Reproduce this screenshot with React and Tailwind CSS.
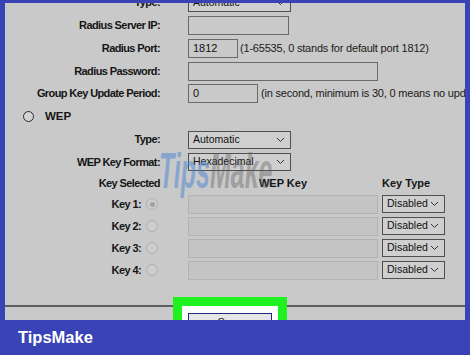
import React from "react";

const font = "font-['Liberation_Sans',Arial,sans-serif]";

function Chevron() {
  return (
    <svg width="9" height="6" viewBox="0 0 9 6" className="shrink-0">
      <polyline points="1,1 4.5,4.5 8,1" fill="none" stroke="#333" strokeWidth="1" />
    </svg>
  );
}

function Select({ value, w }) {
  return (
    <div
      className={`${w} h-[18px] border border-[#4f4f4f] bg-[#cfcfcf] flex items-center justify-between pl-[4px] pr-[5px] text-[10.5px] text-[#111]`}
    >
      <span>{value}</span>
      <Chevron />
    </div>
  );
}

function Label({ children, w = "w-[155px]" }) {
  return (
    <div className={`${w} shrink-0 text-right font-bold text-[11px] tracking-[-0.6px] text-[#151515]`}>
      {children}
    </div>
  );
}

function Field({ w, value }) {
  return (
    <div
      className={`${w} h-[19px] border border-[#6a6a6a] bg-[#c9c9c9] flex items-center pl-[4px] text-[11px] text-[#111]`}
    >
      {value}
    </div>
  );
}

function KeyRow({ n, checked }) {
  return (
    <div className="flex items-center h-[22px]">
      <Label w="w-[136px]">Key {n}:</Label>
      <div className="ml-[5px] w-[12px] h-[12px] rounded-full border border-[#b0b0b0] bg-[#cdcdcd] flex items-center justify-center">
        {checked && <div className="w-[5px] h-[5px] rounded-full bg-[#a0a0a0]" />}
      </div>
      <div className="ml-[30px] w-[190px] h-[19px] border border-[#b3b3b3] bg-[#c4c4c4]" />
      <div className="ml-[4px]">
        <Select value="Disabled" w="w-[63px]" />
      </div>
    </div>
  );
}

export default function App() {
  return (
    <div className={`w-[470px] h-[355px] bg-[#3a43b6] flex flex-col ${font}`}>
      <div className="px-[5px] pt-[3px]">
        <div className="relative h-[317px] bg-[#c9c9c9] overflow-hidden">
          <div className="-mt-[12px]">
            <div className="flex items-center h-[23px]">
              <Label>Type:</Label>
              <div className="ml-[28px]">
                <Select value="Automatic" w="w-[103px]" />
              </div>
            </div>
            <div className="flex items-center h-[23px]">
              <Label>Radius Server IP:</Label>
              <div className="ml-[28px]">
                <Field w="w-[101px]" />
              </div>
            </div>
            <div className="flex items-center h-[23px] whitespace-nowrap">
              <Label>Radius Port:</Label>
              <div className="ml-[28px]">
                <Field w="w-[50px]" value="1812" />
              </div>
              <span className="ml-[2px] text-[11px] tracking-[-0.2px] text-[#1a1a1a]">
                (1-65535, 0 stands for default port 1812)
              </span>
            </div>
            <div className="flex items-center h-[22px]">
              <Label>Radius Password:</Label>
              <div className="ml-[28px]">
                <Field w="w-[190px]" />
              </div>
            </div>
            <div className="flex items-center h-[23px] whitespace-nowrap">
              <Label>Group Key Update Period:</Label>
              <div className="ml-[28px]">
                <Field w="w-[70px]" value="0" />
              </div>
              <span className="ml-[3px] text-[11px] tracking-[-0.2px] text-[#1a1a1a]">
                (in second, minimum is 30, 0 means no update)
              </span>
            </div>

            <div className="flex items-center h-[23px] pl-[18px]">
              <div className="w-[11px] h-[11px] rounded-full border border-[#2a2a2a] bg-[#d2d2d2]" />
              <span className="ml-[11px] font-bold text-[11.5px] text-[#151515]">WEP</span>
            </div>

            <div className="flex items-center h-[23px]">
              <Label>Type:</Label>
              <div className="ml-[28px]">
                <Select value="Automatic" w="w-[103px]" />
              </div>
            </div>
            <div className="flex items-center h-[22px]">
              <Label>WEP Key Format:</Label>
              <div className="ml-[28px]">
                <Select value="Hexadecimal" w="w-[103px]" />
              </div>
            </div>

            <div className="flex items-center h-[20px]">
              <Label>Key Selected</Label>
              <div className="ml-[28px] w-[190px] text-center font-bold text-[11px] text-[#151515]">
                WEP Key
              </div>
              <div className="ml-[4px] font-bold text-[11px] text-[#151515]">Key Type</div>
            </div>

            <KeyRow n={1} checked />
            <KeyRow n={2} />
            <KeyRow n={3} />
            <KeyRow n={4} />

            <div className="relative mt-[24px]">
              <div className="h-[2px] bg-[#5e5e5e]" />
              <div className="absolute left-[168px] -top-[8px] w-[114px] h-[40px] border-[9px] border-[#1ff01f] bg-white">
                <div className="mt-[7px] ml-[6px] w-[84px] h-[18px] border border-[#1f2a7a] bg-[#e6e6e6] flex justify-center text-[11px] text-[#111]">
                  Save
                </div>
              </div>
            </div>
          </div>

          <div className="absolute left-[154px] top-[143px] pointer-events-none whitespace-nowrap">
            <div className="origin-left scale-x-[0.5] font-bold italic text-[50px] leading-none">
              <span className="text-[rgba(70,130,210,0.5)]">Tips</span>
              <span className="text-[rgba(90,90,90,0.4)]">Make</span>
            </div>
          </div>
        </div>
      </div>
      <div className="h-[35px] flex items-center pl-[18px]">
        <span className="text-white font-bold text-[16.5px]">TipsMake</span>
      </div>
    </div>
  );
}
